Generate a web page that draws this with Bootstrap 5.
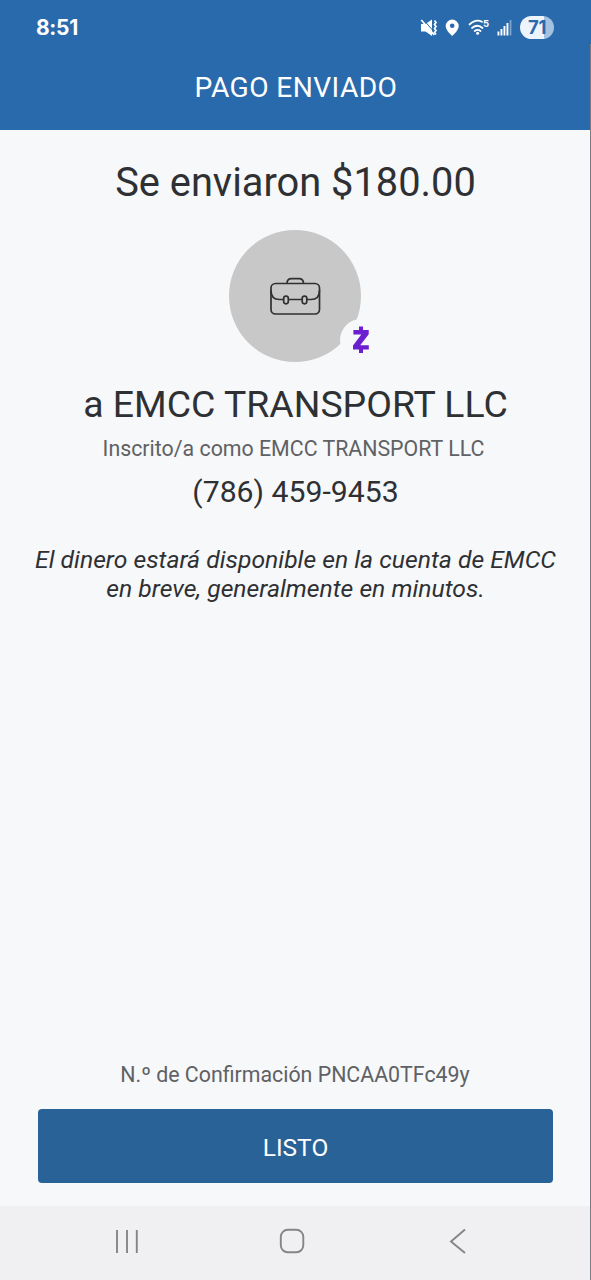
<!DOCTYPE html>
<html lang="es">
<head>
<meta charset="utf-8">
<meta name="viewport" content="width=device-width, initial-scale=1">
<title>Pago enviado</title>
<link href="https://cdn.jsdelivr.net/npm/bootstrap@5.3.0/dist/css/bootstrap.min.css" rel="stylesheet">
<style>
body{font-family:Roboto,"Liberation Sans",sans-serif;background:#f6f8fa;color:#2f3033;height:1280px;overflow:hidden}
.screen{height:1280px;position:relative}
.screen::after{content:"";position:absolute;right:0;top:44px;bottom:0;width:1px;background:#777c82}
.top-area{height:130px;background:#296aac;color:#fff}
.status-row{height:54px;padding:1px 37px 0 36px}
.clock{font-family:Inter,Roboto,sans-serif;font-weight:700;font-size:21px;line-height:24px;letter-spacing:-.3px}
.battery{width:34px;height:23px;border-radius:12px;background:linear-gradient(90deg,#edf4fc 72%,#a5c1e0 72%);color:#296aac;font:700 18.5px/23px Inter,Roboto,sans-serif;letter-spacing:-.4px}
.page-title{font-size:28.2px;line-height:32px;padding-top:18px;letter-spacing:.4px;padding-left:1px}
.line{white-space:nowrap}
.amount{font-size:39.8px;line-height:48px;margin-top:29px}
.avatar-disc{width:132px;height:132px;margin-top:23px;margin-right:1px;background:#c8c8c8}
.zelle{width:42px;height:42px;background:#f6f8fa;right:-21px;bottom:1px}
.payee{font-size:37.4px;line-height:44px;margin-top:20px}
.muted{color:#606164;font-size:21.35px;line-height:26px}
.enrolled{margin-top:10px;margin-right:4px}
.phone{font-size:30.2px;line-height:36px;margin-top:12px}
.notice{font-size:24.72px;line-height:29px;margin-top:35px}
.confirm{margin-right:1px}
.done-btn{width:515px;height:74px;border-radius:4px;background:#286297;color:#fff;font-size:24.5px;margin:21px 0 23px}
.done-btn:hover{background:#286297;color:#fff}
.nav-keys{height:74px;background:#f0f0f2}
</style>
</head>
<body>
<div class="screen d-flex flex-column">
  <header class="top-area">
    <div class="status-row d-flex align-items-center justify-content-between">
      <span class="clock">8:51</span>
      <div class="d-flex align-items-center">
        <svg width="100" height="24" viewBox="416 15.500 100 24" fill="#fff">
          <path d="M421 23.500h4.500l6.500-4.500v16.500l-6.500-4.500H421z"/>
          <path d="M422.700 18.500l12.500 14" stroke="#296aac" stroke-width="1"/>
          <path d="M421.300 19.500l13 15" stroke="#fff" stroke-width="1.800"/>
          <path d="M434.500 20l1.500 2-1.500 2 1.500 2-1.500 2 1.500 2-1.500 2 1.500 2" stroke="#fff" stroke-width="1.700" fill="none"/>
          <path fill-rule="evenodd" d="M452.200 19a6.500 6.500 0 0 0-6.500 6.500c0 4.500 6.500 10 6.500 10s6.500-5.500 6.500-10a6.500 6.500 0 0 0-6.500-6.500zm0 4a2.300 2.300 0 1 1 0 4.600 2.300 2.300 0 0 1 0-4.600z"/>
          <g fill="none" stroke="#fff" stroke-width="1.800" stroke-linecap="round"><path d="M469.500 24q6.500-6 12.500-2.700M472 27.500q5.500-4.500 10.500 0M474.700 30.500q3-2.200 5.800 0"/></g>
          <circle cx="477.600" cy="32.800" r="1.500"/>
          <text x="483" y="26.500" font-family="Inter,Roboto,sans-serif" font-size="9.500" font-weight="700">5</text>
          <path d="M497.500 31h1.900v4h-1.900zM500.500 28.500h1.900V35h-1.900zM503.500 25.500h1.900V35h-1.900zM506.500 22.500h1.900V35h-1.900z"/>
          <path d="M509.700 19.500h1.700V35h-1.700z" opacity=".4"/>
        </svg>
        <span class="battery text-center ms-1">71</span>
      </div>
    </div>
    <div class="page-title text-center line">PAGO ENVIADO</div>
  </header>
  <main class="flex-grow-1 d-flex flex-column align-items-center text-center">
    <div class="amount line">Se enviaron $180.00</div>
    <div class="avatar-disc rounded-circle position-relative d-flex align-items-center justify-content-center">
      <svg width="52" height="40" viewBox="269 276 52 40" fill="none" stroke="#303030" stroke-width="1.700">
        <rect x="271" y="283.500" width="48.500" height="30.500" rx="4.500"/>
        <path d="M287 283.500c0-3.500 2-4.800 4.500-4.800h7.500c3 0 4.500 1.500 4.500 4.800M271 290.500c0 5.500 3 9 8.500 9h4M288.500 299.500h13.500M307 299.500h4c5.500 0 8.500-3.500 8.500-9"/>
        <rect x="283.700" y="296.200" width="4.600" height="7.600" rx="2.200"/><rect x="302.200" y="296.200" width="4.600" height="7.600" rx="2.200"/>
      </svg>
      <span class="zelle rounded-circle position-absolute d-flex align-items-center justify-content-center">
        <svg width="18" height="28" viewBox="0 0 18 28" fill="#6b1fd0"><path d="M7 .500h4v3.500h5.700v4.300L8.200 19.200h8.600v4.300H11V27H7v-3.500H1v-4L9.300 8.500H1.400V4H7z"/></svg>
      </span>
    </div>
    <div class="payee line">a EMCC TRANSPORT LLC</div>
    <div class="muted line enrolled">Inscrito/a como EMCC TRANSPORT LLC</div>
    <div class="phone line">(786) 459-9453</div>
    <div class="notice fst-italic line">El dinero estará disponible en la cuenta de EMCC<br>en breve, generalmente en minutos.</div>
    <div class="muted line mt-auto confirm">N.º de Confirmación PNCAA0TFc49y</div>
    <button class="btn done-btn border-0 p-0 pt-1" type="button">LISTO</button>
  </main>
  <nav class="nav-keys" aria-label="Sistema">
    <svg class="d-block" width="591" height="74" viewBox="0 1206 591 74" fill="none" stroke="#858588" stroke-width="1.900">
      <path d="M117 1230v23M127 1230v23M136.800 1230v23"/>
      <rect x="280.800" y="1229.800" width="22.500" height="22.500" rx="7"/>
      <path d="M465 1229.500l-14 12 14 11.500"/>
    </svg>
  </nav>
</div>
<script src="https://cdn.jsdelivr.net/npm/bootstrap@5.3.0/dist/js/bootstrap.bundle.min.js"></script>
</body>
</html>
